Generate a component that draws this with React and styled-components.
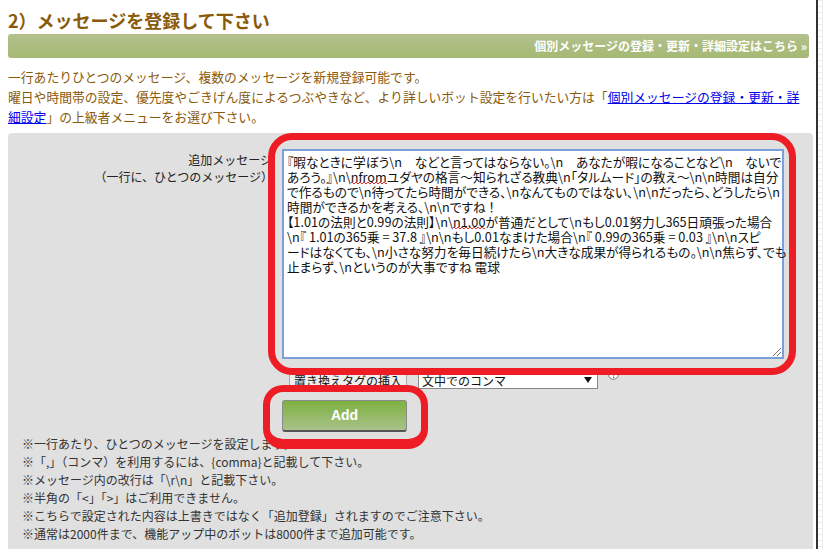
import React from 'react';
import styled, { createGlobalStyle } from 'styled-components';

const GlobalStyle = createGlobalStyle`
  html, body {
    margin: 0;
    height: 549px;
    overflow: hidden;
    background-color: #fff;
    background-image:
      linear-gradient(#ececec 1px, transparent 1px),
      linear-gradient(90deg, #ececec 1px, transparent 1px);
    background-size: 6px 6px;
  }
  * {
    font-family: "Noto Sans CJK JP", "Liberation Sans", sans-serif;
  }
`;

const Page = styled.div`
  width: 818px;
  height: 549px;
  overflow: hidden;
  background: #fff;
  border-right: 2px solid #333;
  padding: 0 3px 0 8px;
  box-sizing: border-box;
`;

const Heading = styled.h2`
  margin: 0;
  padding-top: 9px;
  height: 34px;
  box-sizing: border-box;
  font-size: 18px;
  line-height: 22px;
  font-weight: 700;
  color: #8a5a0b;
`;

const LinkBar = styled.div`
  height: 24px;
  margin-right: 4px;
  padding-right: 2px;
  border-radius: 3px;
  background: linear-gradient(#b3c08d, #a5b973);
  color: #fff;
  font-size: 12px;
  font-weight: 700;
  line-height: 24px;
  text-align: right;
`;

const Intro = styled.p`
  margin: 9px 0 0 0;
  font-size: 12.8px;
  line-height: 20px;
  color: #8a5a0b;
  white-space: nowrap;
`;

const IntroLink = styled.a`
  color: #0000ee;
  text-decoration: underline;
`;

const Panel = styled.div`
  position: relative;
  margin-top: 6px;
  height: 430px;
  padding: 16px 0 0;
  box-sizing: border-box;
  border-radius: 4px 4px 0 0;
  background: #e0e0e0;
`;

const FormRow = styled.div`
  display: grid;
  grid-template-columns: 264px 502px;
  column-gap: 10px;
`;

const FieldLabel = styled.div`
  padding-top: 2px;
  font-size: 12px;
  line-height: 17px;
  color: #222;
  text-align: right;
`;

const LabelNote = styled.span`
  display: block;
  margin-right: -1px;
`;

const MessageBox = styled.div`
  position: relative;
  height: 210px;
  padding: 3px 0 0 3px;
  box-sizing: border-box;
  border: 2px solid #7c9fd8;
  background: #fff;
  font-size: 12.7px;
  line-height: 15px;
  color: #111;
`;

const MessageLine = styled.div`
  white-space: nowrap;
  font-feature-settings: "palt";
`;

const Misspelled = styled.span`
  display: inline-block;
  background-image:
    repeating-linear-gradient(90deg, #e03030 0 2px, transparent 2px 4px),
    repeating-linear-gradient(90deg, transparent 0 2px, #e03030 2px 4px);
  background-size: 100% 1px;
  background-position: 0 13px, 0 14px;
  background-repeat: no-repeat;
`;

const ResizeGrip = styled.svg`
  position: absolute;
  right: 0;
  bottom: 0;
`;

const TagRow = styled.div`
  display: flex;
  align-items: flex-start;
  margin: 13px 0 0 281px;
  height: 17px;
`;

const TagButton = styled.button`
  width: 118px;
  height: 17px;
  padding: 0;
  border: 1px solid #aaa;
  background: #efefef;
  color: #111;
  font-size: 12px;
  line-height: 15px;
  overflow: hidden;
`;

const TagSelect = styled.div`
  display: flex;
  align-items: center;
  justify-content: space-between;
  margin-left: 11px;
  width: 180px;
  height: 17px;
  padding: 0 5px 0 3px;
  box-sizing: border-box;
  border: 1px solid #888;
  border-top: 0;
  background: #fff;
  color: #111;
  font-size: 12px;
  line-height: 15px;
`;

const SelectArrow = styled.span`
  width: 0;
  height: 0;
  border-left: 4px solid transparent;
  border-right: 4px solid transparent;
  border-top: 6px solid #111;
`;

const HelpIcon = styled.svg`
  margin: -3px 0 0 10px;
`;

const AddWrap = styled.div`
  margin: 11px 0 0 274px;
`;

const AddButton = styled.button`
  display: block;
  width: 125px;
  height: 32px;
  padding: 0 0 2px;
  border: 1px solid #8a8a8a;
  border-bottom: 2px solid #555;
  border-radius: 3px;
  background: linear-gradient(#7db23f, #aac18a);
  color: #fff;
  font-size: 14px;
  font-weight: 700;
  font-family: "Liberation Sans", sans-serif;
`;

const Notes = styled.ul`
  list-style: none;
  margin: 3px 0 0;
  padding: 0 0 0 14px;
`;

const Note = styled.li`
  font-size: 12px;
  line-height: 18px;
  color: #333;
`;

const Callout = styled.div`
  position: absolute;
  box-sizing: border-box;
  border: 7px solid #ee1c25;
  pointer-events: none;
`;

const TextCallout = styled(Callout)`
  left: 260px;
  top: 0;
  width: 528px;
  height: 242px;
  border-radius: 24px;
`;

const AddCallout = styled(Callout)`
  left: 255px;
  top: 252px;
  width: 165px;
  height: 64px;
  border-bottom-width: 10px;
  border-radius: 20px;
`;

const notes = [
  '※一行あたり、ひとつのメッセージを設定します。',
  '※「,」（コンマ）を利用するには、{comma}と記載して下さい。',
  '※メッセージ内の改行は「\\r\\n」と記載下さい。',
  '※半角の「<」「>」はご利用できません。',
  '※こちらで設定された内容は上書きではなく「追加登録」されますのでご注意下さい。',
  '※通常は2000件まで、機能アップ中のボットは8000件まで追加可能です。',
];

export default function App() {
  return (
    <>
      <GlobalStyle />
      <Page>
        <Heading>2）メッセージを登録して下さい</Heading>
        <LinkBar>個別メッセージの登録・更新・詳細設定はこちら »</LinkBar>
        <Intro>
          一行あたりひとつのメッセージ、複数のメッセージを新規登録可能です。<br />
          曜日や時間帯の設定、優先度やごきげん度によるつぶやきなど、より詳しいボット設定を行いたい方は「<IntroLink href="#">個別メッセージの登録・更新・詳<br />細設定</IntroLink>」の上級者メニューをお選び下さい。
        </Intro>
        <Panel>
          <FormRow>
            <FieldLabel>
              追加メッセージ
              <LabelNote>（一行に、ひとつのメッセージ）</LabelNote>
            </FieldLabel>
            <MessageBox>
              <MessageLine>『暇なときに学ぼう\n　などと言ってはならない。\n　あなたが暇になることなど\n　ないで</MessageLine>
              <MessageLine>あろう。』\n\<Misspelled>nfrom</Misspelled>ユダヤの格言～知られざる教典\n「タルムード」の教え～\n\n時間は自分</MessageLine>
              <MessageLine>で作るもので\n待ってたら時間ができる、\nなんてものではない、\n\nだったら、どうしたら\n</MessageLine>
              <MessageLine>時間ができるかを考える、\n\nですね ！</MessageLine>
              <MessageLine>【1.01の法則と0.99の法則】\n\<Misspelled>n1.00</Misspelled>が普通だとして\nもし0.01努力し365日頑張った場合</MessageLine>
              <MessageLine>\n『 1.01の365乗 = 37.8 』\n\nもし0.01なまけた場合\n『 0.99の365乗 = 0.03 』\n\nスピ</MessageLine>
              <MessageLine>ードはなくても、\n小さな努力を毎日続けたら\n大きな成果が得られるもの。\n\n焦らず、でも</MessageLine>
              <MessageLine>止まらず、\nというのが大事ですね 電球</MessageLine>
              <ResizeGrip width="11" height="11" viewBox="0 0 11 11">
                <path d="M2 10 L10 2 M6 10 L10 6" stroke="#777" strokeWidth="1" fill="none" />
              </ResizeGrip>
            </MessageBox>
          </FormRow>
          <TagRow>
            <TagButton>置き換えタグの挿入</TagButton>
            <TagSelect>
              文中でのコンマ
              <SelectArrow />
            </TagSelect>
            <HelpIcon width="11" height="11" viewBox="0 0 11 11">
              <circle cx="5.5" cy="5.5" r="4.8" fill="#fff" stroke="#777" />
              <path d="M3.8 4 A1.8 1.8 0 1 1 6 5.6 L5.5 6.5" stroke="#d22" strokeWidth="1.3" fill="none" />
              <rect x="5" y="7.6" width="1.2" height="1.4" fill="#d22" />
            </HelpIcon>
          </TagRow>
          <AddWrap>
            <AddButton>Add</AddButton>
          </AddWrap>
          <Notes>
            {notes.map((note) => (
              <Note key={note}>{note}</Note>
            ))}
          </Notes>
          <TextCallout />
          <AddCallout />
        </Panel>
      </Page>
    </>
  );
}
